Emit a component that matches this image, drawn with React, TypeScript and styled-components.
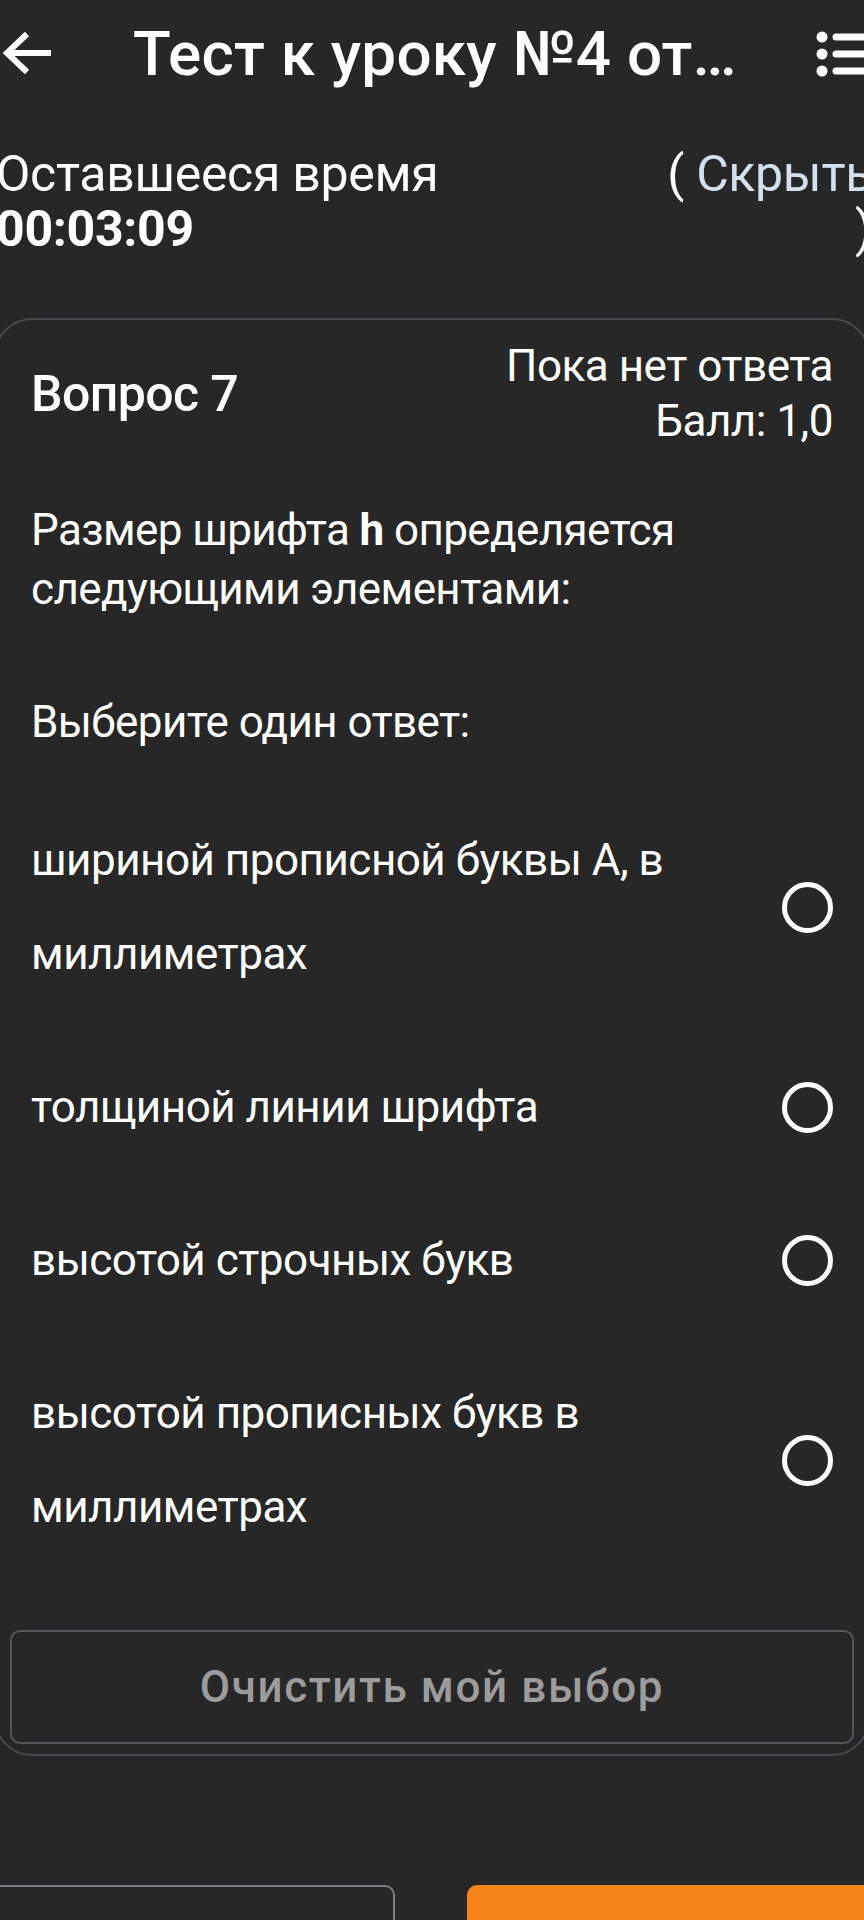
import React from "react";
import styled, { createGlobalStyle } from "styled-components";

const GlobalStyle = createGlobalStyle`
  html, body {
    margin: 0;
    padding: 0;
    background: #272727;
  }
  body {
    font-family: Roboto, "Noto Sans", "Liberation Sans", sans-serif;
    color: #ffffff;
    overflow-x: hidden;
  }
`;

const Page = styled.div`
  width: 864px;
  min-height: 1920px;
  overflow: hidden;
  background: #272727;
`;

const Header = styled.header`
  display: flex;
  align-items: center;
  height: 108px;
`;

const IconButton = styled.button<{ $edge?: number }>`
  display: flex;
  align-items: center;
  justify-content: center;
  background: none;
  border: 0;
  padding: 0;
  margin-right: ${({ $edge }) => $edge ?? 0}px;
  color: #ffffff;
`;

const Title = styled.h1`
  margin: 0 0 0 78px;
  font-size: 62px;
  font-weight: 500;
  letter-spacing: 0.2px;
  line-height: 1;
  white-space: nowrap;
  flex: 1;
`;

const Timer = styled.div`
  display: flex;
  justify-content: space-between;
  align-items: flex-start;
  margin: 39px -8px 0 -4px;
  font-size: 50px;
  line-height: 55px;
  letter-spacing: -0.3px;
`;

const TimeValue = styled.div`
  font-weight: 700;
`;

const HideLink = styled.div`
  width: 214px;
  text-align: right;
`;

const LinkText = styled.span`
  color: #d3e1ef;
`;

const Card = styled.section`
  margin: 61px -6px 0;
  border: 2px solid #46494d;
  border-radius: 38px;
  padding: 19px 35px 10px;
`;

const CardHead = styled.div`
  display: flex;
  justify-content: space-between;
  align-items: center;
`;

const QuestionNo = styled.h2`
  margin: 0;
  font-size: 50px;
  font-weight: 500;
  line-height: 1.2;
  letter-spacing: -0.6px;
`;

const Status = styled.div`
  text-align: right;
  font-size: 44px;
  line-height: 55px;
  letter-spacing: -0.5px;
`;

const Text = styled.p<{ $gap: number }>`
  margin: ${({ $gap }) => $gap}px 0 0;
  font-size: 44px;
  line-height: 59px;
  letter-spacing: -0.6px;
`;

const Options = styled.div`
  display: flex;
  flex-direction: column;
  gap: 59px;
  margin-top: 61px;
`;

const Option = styled.label`
  display: flex;
  align-items: center;
  justify-content: space-between;
  gap: 24px;
  font-size: 44px;
  line-height: 94px;
  letter-spacing: -0.5px;
`;

const Radio = styled.span`
  flex: none;
  width: 41px;
  height: 41px;
  border: 5px solid #ffffff;
  border-radius: 50%;
`;

const ClearButton = styled.button`
  display: block;
  width: calc(100% + 42px);
  height: 114px;
  margin: 76px -21px 0;
  background: transparent;
  border: 2px solid #55585d;
  border-radius: 10px;
  color: #9c9c9c;
  font-family: inherit;
  font-size: 44px;
  font-weight: 500;
  letter-spacing: 1.6px;
`;

const Footer = styled.div`
  display: flex;
  gap: 72px;
  margin: 129px 0 0 -26px;
  width: 950px;
`;

const NavButton = styled.button<{ $primary?: boolean }>`
  width: 421px;
  height: 110px;
  border-radius: 10px;
  border: 2px solid ${({ $primary }) => ($primary ? "#f7841a" : "#7b7e83")};
  background: ${({ $primary }) => ($primary ? "#f7841a" : "transparent")};
`;

const BackIcon = () => (
  <svg width="56" height="56" viewBox="0 0 56 56" style={{ marginLeft: -1 }}>
    <path
      d="M52 27 H10 M28 8 L8 27 L28 46"
      fill="none"
      stroke="#fff"
      strokeWidth="6"
      strokeLinecap="butt"
      strokeLinejoin="miter"
    />
  </svg>
);

const MenuIcon = () => (
  <svg width="60" height="60" viewBox="0 0 60 60">
    <circle cx="10" cy="13" r="5.5" fill="#fff" />
    <circle cx="10" cy="30" r="5.5" fill="#fff" />
    <circle cx="10" cy="47" r="5.5" fill="#fff" />
    <path d="M24 13 H70 M24 30 H70 M24 47 H70" stroke="#fff" strokeWidth="7" strokeLinecap="round" />
  </svg>
);

const answers = [
  "шириной прописной буквы А, в миллиметрах",
  "толщиной линии шрифта",
  "высотой строчных букв",
  "высотой прописных букв в миллиметрах",
];

export default function App() {
  return (
    <Page>
      <GlobalStyle />
      <Header>
        <IconButton aria-label="Назад">
          <BackIcon />
        </IconButton>
        <Title>Тест к уроку №4 от…</Title>
        <IconButton aria-label="Меню" $edge={-8}>
          <MenuIcon />
        </IconButton>
      </Header>

      <Timer>
        <div>
          <div>Оставшееся время</div>
          <TimeValue>00:03:09</TimeValue>
        </div>
        <HideLink>
          ( <LinkText>Скрыть</LinkText> )
        </HideLink>
      </Timer>

      <Card>
        <CardHead>
          <QuestionNo>Вопрос 7</QuestionNo>
          <Status>
            <div>Пока нет ответа</div>
            <div>Балл: 1,0</div>
          </Status>
        </CardHead>

        <Text $gap={52}>
          Размер шрифта <b>h</b> определяется следующими элементами:
        </Text>
        <Text $gap={74}>Выберите один ответ:</Text>

        <Options>
          {answers.map((a) => (
            <Option key={a}>
              <span>{a}</span>
              <Radio />
            </Option>
          ))}
        </Options>

        <ClearButton>Очистить мой выбор</ClearButton>
      </Card>

      <Footer>
        <NavButton />
        <NavButton $primary />
      </Footer>
    </Page>
  );
}
